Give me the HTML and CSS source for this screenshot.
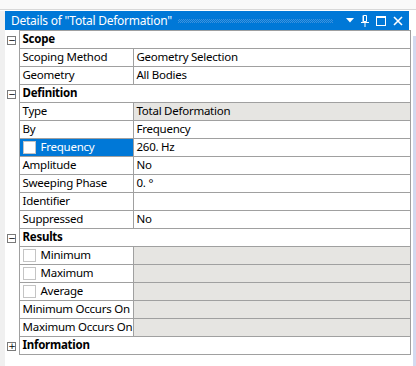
FILE: index.html
```html
<!DOCTYPE html>
<html lang="en">
<head>
    <meta charset="UTF-8">
    <title>Details of "Total Deformation"</title>
    <link rel="stylesheet" href="styles.css">
</head>
<body>

<div class="topbar"></div>
<div class="frame">
    <div class="side-left"></div>
    <div class="panel">
        <div class="titlebar">
            <span class="title">Details of "Total Deformation"</span>
            <span class="grip"></span>
            <svg class="ico" width="8" height="5" viewBox="0 0 8 5"><polygon points="0,0 8,0 4,4.5" fill="#fff"/></svg>
            <svg class="ico" width="8" height="12" viewBox="0 0 8 12"><path d="M2.5 0.5h3v6h-3z M0 7.5h8 M4 8v4" stroke="#fff" stroke-width="1" fill="none"/><path d="M2 0.5v6.5" stroke="#fff" stroke-width="1"/></svg>
            <svg class="ico" width="10" height="10" viewBox="0 0 10 10"><rect x="0.5" y="1" width="9" height="8.5" stroke="#fff" fill="none"/><path d="M0 1h10" stroke="#fff" stroke-width="2"/></svg>
            <svg class="ico" width="10" height="10" viewBox="0 0 10 10"><path d="M1 1l8 8M9 1l-8 8" stroke="#fff" stroke-width="1.6"/></svg>
        </div>
        <table class="grid">
            <colgroup>
                <col class="c-gutter">
                <col class="c-prop">
                <col class="c-val">
            </colgroup>
            <tr class="group">
                <td class="gutter"><span class="toggle">&minus;</span></td>
                <td class="head" colspan="2">Scope</td>
            </tr>
            <tr>
                <td class="gutter"></td>
                <td class="prop">Scoping Method</td>
                <td class="val">Geometry Selection</td>
            </tr>
            <tr>
                <td class="gutter"></td>
                <td class="prop">Geometry</td>
                <td class="val">All Bodies</td>
            </tr>
            <tr class="group">
                <td class="gutter"><span class="toggle">&minus;</span></td>
                <td class="head" colspan="2">Definition</td>
            </tr>
            <tr>
                <td class="gutter"></td>
                <td class="prop">Type</td>
                <td class="val readonly">Total Deformation</td>
            </tr>
            <tr>
                <td class="gutter"></td>
                <td class="prop">By</td>
                <td class="val">Frequency</td>
            </tr>
            <tr>
                <td class="gutter"></td>
                <td class="prop selected"><span class="check"></span>Frequency</td>
                <td class="val">260. Hz</td>
            </tr>
            <tr>
                <td class="gutter"></td>
                <td class="prop">Amplitude</td>
                <td class="val">No</td>
            </tr>
            <tr>
                <td class="gutter"></td>
                <td class="prop">Sweeping Phase</td>
                <td class="val">0. &deg;</td>
            </tr>
            <tr>
                <td class="gutter"></td>
                <td class="prop">Identifier</td>
                <td class="val"></td>
            </tr>
            <tr>
                <td class="gutter"></td>
                <td class="prop">Suppressed</td>
                <td class="val">No</td>
            </tr>
            <tr class="group">
                <td class="gutter"><span class="toggle">&minus;</span></td>
                <td class="head" colspan="2">Results</td>
            </tr>
            <tr>
                <td class="gutter"></td>
                <td class="prop"><span class="check"></span>Minimum</td>
                <td class="val readonly"></td>
            </tr>
            <tr>
                <td class="gutter"></td>
                <td class="prop"><span class="check"></span>Maximum</td>
                <td class="val readonly"></td>
            </tr>
            <tr>
                <td class="gutter"></td>
                <td class="prop"><span class="check"></span>Average</td>
                <td class="val readonly"></td>
            </tr>
            <tr>
                <td class="gutter"></td>
                <td class="prop">Minimum Occurs On</td>
                <td class="val readonly"></td>
            </tr>
            <tr>
                <td class="gutter"></td>
                <td class="prop">Maximum Occurs On</td>
                <td class="val readonly"></td>
            </tr>
            <tr class="group">
                <td class="gutter"><span class="toggle">+</span></td>
                <td class="head" colspan="2">Information</td>
            </tr>
        </table>
    </div>
    <div class="side-right"><span class="rail"></span></div>
</div>

</body>
</html>
```

FILE: styles.css
```css
body {
    margin: 0;
    background-color: #fff;
    font-family: "Noto Sans", "Open Sans", sans-serif;
    font-size: 11.5px;
    letter-spacing: -0.25px;
    color: #000;
}
.topbar {
    height: 9px;
    background-color: #f9f9f9;
    border-bottom: 1px solid #d8d8d8;
}
.frame {
    display: flex;
    padding-top: 1px;
    height: 356px;
}
.side-left {
    width: 5px;
    background-color: #f0f0f0;
}
.panel {
    width: 406px;
}
.side-right {
    flex: 1;
    display: flex;
    justify-content: flex-end;
    padding-top: 25px;
}
.rail {
    width: 3px;
    background-color: #d4daf0;
}
.titlebar {
    display: flex;
    align-items: center;
    height: 19px;
    margin-right: 2px;
    padding-left: 6px;
    padding-right: 6px;
    background-color: #0078d7;
    color: #fff;
}
.title {
    font-size: 12px;
    white-space: nowrap;
}
.grip {
    flex: 1;
    height: 4px;
    margin: 0 6px;
    background: repeating-conic-gradient(#3f93de 0 25%, transparent 0 50%) 0 0 / 2px 2px;
}
.ico {
    display: block;
    margin-left: 7px;
}
.grid {
    border-collapse: collapse;
    width: 406px;
    table-layout: fixed;
}
.c-gutter {
    width: 14px;
}
.c-prop {
    width: 114px;
}
.grid td {
    height: 17px;
    padding: 0 0 0 3px;
    white-space: nowrap;
    overflow: hidden;
    line-height: 16px;
    vertical-align: top;
}
.grid td.gutter {
    padding: 0;
    border: none;
    text-align: center;
    vertical-align: middle;
    line-height: 17px;
}
.prop, .val, .head {
    border: 1px solid #a0a0a0;
}
.head {
    font-weight: bold;
}
.readonly {
    background-color: #e6e5e2;
}
.selected {
    background-color: #0078d7;
    color: #fff;
}
.toggle {
    display: inline-block;
    width: 9px;
    height: 9px;
    border: 1px solid #7a7a7a;
    box-sizing: border-box;
    font-size: 9px;
    line-height: 6px;
    letter-spacing: 0;
    text-align: center;
    vertical-align: middle;
    font-family: "DejaVu Sans", sans-serif;
}
.check {
    display: inline-block;
    width: 11px;
    height: 11px;
    margin-right: 5px;
    border: 1px solid #c4c4c4;
    background-color: #fff;
    vertical-align: -3px;
}
```
